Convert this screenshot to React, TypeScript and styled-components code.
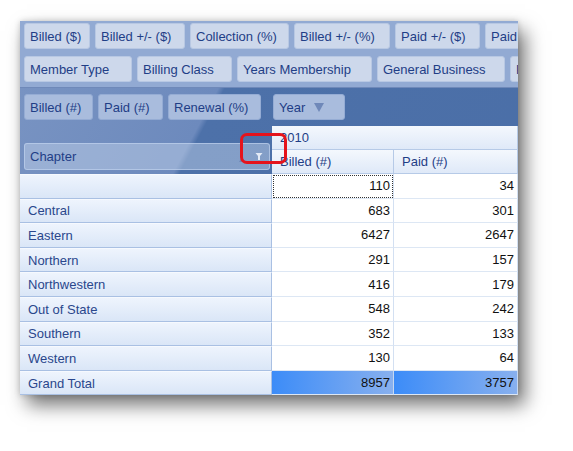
import styled, { createGlobalStyle } from 'styled-components';

const GlobalStyle = createGlobalStyle`
  html, body {
    margin: 0;
    padding: 0;
    background: #ffffff;
  }
  body {
    font-family: 'Liberation Sans', Arial, sans-serif;
    font-size: 13px;
  }
`;

const Page = styled.div`
  width: 573px;
  height: 451px;
  padding: 21px 0 0 20px;
  box-sizing: border-box;
  overflow: hidden;
`;

const Panel = styled.div`
  position: relative;
  width: 498px;
  background: #ffffff;
  box-shadow: 7px 10px 18px rgba(0, 0, 0, 0.55), 0 0 6px rgba(0, 0, 0, 0.18);
`;

const FieldArea = styled.div`
  display: flex;
  flex-direction: column;
  gap: 7px;
  padding: 2px 0 5px 4px;
  background: #92aad3;
  border-bottom: 1px solid #6f89b9;
  overflow: hidden;
`;

const ChipRow = styled.div`
  display: flex;
  gap: 5px;
  white-space: nowrap;
`;

const Chip = styled.div<{ $w: number; $dark?: boolean }>`
  flex: none;
  width: ${(p) => p.$w}px;
  height: 26px;
  box-sizing: border-box;
  display: flex;
  align-items: center;
  gap: 9px;
  padding: 0 0 0 5px;
  border-radius: 3px;
  background: ${(p) => (p.$dark ? '#a9bcdd' : '#cdd8eb')};
  border: 1px solid ${(p) => (p.$dark ? '#95acd4' : '#b8c8e3')};
  color: #1f3e86;
  overflow: hidden;
`;

const DropArrow = styled.span`
  width: 0;
  height: 0;
  border-left: 5px solid transparent;
  border-right: 5px solid transparent;
  border-top: 9px solid #6f88b9;
`;

const DarkArea = styled.div`
  background: linear-gradient(118deg, #7893c2 0%, #6d8abd 30%, #4d71a9 31%, #4a6ea7 100%);
`;

const DataToolbar = styled.div`
  display: flex;
  gap: 5px;
  padding: 6px 0 6px 4px;
`;

const Spacer = styled.div<{ $w: number }>`
  flex: none;
  width: ${(p) => p.$w}px;
`;

const Grid = styled.div`
  display: grid;
  grid-template-columns: 252px 122px 1fr;
  grid-template-rows: 24px 24px;
  grid-auto-rows: 24.6px;
`;

const ChapterSlot = styled.div`
  grid-row: span 2;
  display: flex;
  align-items: flex-end;
  padding: 0 2px 4px 4px;
`;

const ChapterButton = styled.div`
  flex: 1;
  height: 27px;
  box-sizing: border-box;
  display: flex;
  align-items: center;
  padding: 0 6px 0 5px;
  border-radius: 3px;
  background: rgba(200, 215, 238, 0.45);
  border: 1px solid rgba(190, 208, 236, 0.7);
  color: #1f3e86;
`;

const ChapterLabel = styled.span`
  flex: 1;
`;

const SortMark = styled.span`
  width: 0;
  height: 0;
  margin-right: 10px;
  margin-top: 6px;
  border-left: 3px solid transparent;
  border-right: 3px solid transparent;
  border-bottom: 5px solid #6c86b6;
`;

const HeaderCell = styled.div<{ $span?: number }>`
  grid-column: span ${(p) => p.$span ?? 1};
  display: flex;
  align-items: center;
  padding-left: 8px;
  box-sizing: border-box;
  background: linear-gradient(#f4f8fd, #dfe9f8);
  border-right: 1px solid #b6cae7;
  border-bottom: 1px solid #b6cae7;
  color: #1f3e86;
`;

const RowHeader = styled.div`
  display: flex;
  align-items: center;
  padding-left: 8px;
  box-sizing: border-box;
  background: linear-gradient(#eef4fd, #dae6f7);
  border-top: 1px solid #f6f9fe;
  border-bottom: 1px solid #a9c0e3;
  border-right: 1px solid #a9c0e3;
  color: #2a478c;
`;

const ValueCell = styled.div<{ $total?: boolean; $focus?: boolean }>`
  display: flex;
  align-items: center;
  justify-content: flex-end;
  padding-right: 3px;
  box-sizing: border-box;
  color: #111111;
  background: ${(p) => (p.$total ? 'linear-gradient(90deg, #3c8cf8, #88b0ee)' : '#ffffff')};
  border-right: 1px solid ${(p) => (p.$total ? '#c7d8f0' : '#d3e0f2')};
  border-bottom: 1px solid #dde7f4;
  outline: ${(p) => (p.$focus ? '1px dotted #333333' : 'none')};
  outline-offset: -2px;
`;

const Highlight = styled.div`
  position: absolute;
  left: 220px;
  top: 112px;
  width: 47px;
  height: 31px;
  box-sizing: border-box;
  border: 3px solid #e5131c;
  border-radius: 7px;
  pointer-events: none;
`;

const FilterIcon = () => (
  <svg width="8" height="9" viewBox="0 0 8 9">
    <path d="M0.5 1 H7.5 L5 4 V8 H3 V4 Z" fill="#e3eaf6" />
  </svg>
);

const filterRows = [
  [
    { label: 'Billed ($)', w: 66 },
    { label: 'Billed +/- ($)', w: 90 },
    { label: 'Collection (%)', w: 99 },
    { label: 'Billed +/- (%)', w: 96 },
    { label: 'Paid +/- ($)', w: 85 },
    { label: 'Paid +/- (%)', w: 90 },
  ],
  [
    { label: 'Member Type', w: 108 },
    { label: 'Billing Class', w: 95 },
    { label: 'Years Membership', w: 135 },
    { label: 'General Business', w: 128 },
    { label: 'Payment Method', w: 110 },
  ],
];

const dataFields = [
  { label: 'Billed (#)', w: 69 },
  { label: 'Paid (#)', w: 65 },
  { label: 'Renewal (%)', w: 93 },
];

const chapters = [
  { name: '', billed: 110, paid: 34 },
  { name: 'Central', billed: 683, paid: 301 },
  { name: 'Eastern', billed: 6427, paid: 2647 },
  { name: 'Northern', billed: 291, paid: 157 },
  { name: 'Northwestern', billed: 416, paid: 179 },
  { name: 'Out of State', billed: 548, paid: 242 },
  { name: 'Southern', billed: 352, paid: 133 },
  { name: 'Western', billed: 130, paid: 64 },
];

export default function App() {
  const totalBilled = chapters.reduce((s, c) => s + c.billed, 0);
  const totalPaid = chapters.reduce((s, c) => s + c.paid, 0);

  return (
    <Page>
      <GlobalStyle />
      <Panel>
        <FieldArea>
          {filterRows.map((row, i) => (
            <ChipRow key={i}>
              {row.map((f) => (
                <Chip key={f.label} $w={f.w}>
                  {f.label}
                </Chip>
              ))}
            </ChipRow>
          ))}
        </FieldArea>
        <DarkArea>
          <DataToolbar>
            {dataFields.map((f) => (
              <Chip key={f.label} $w={f.w} $dark>
                {f.label}
              </Chip>
            ))}
            <Spacer $w={2} />
            <Chip $w={72} $dark>
              Year
              <DropArrow />
            </Chip>
          </DataToolbar>
          <Grid>
            <ChapterSlot>
              <ChapterButton>
                <ChapterLabel>Chapter</ChapterLabel>
                <SortMark />
                <FilterIcon />
              </ChapterButton>
            </ChapterSlot>
            <HeaderCell $span={2}>2010</HeaderCell>
            <HeaderCell>Billed (#)</HeaderCell>
            <HeaderCell>Paid (#)</HeaderCell>
            {chapters.map((c, i) => (
              <>
                <RowHeader key={`h${i}`}>{c.name}</RowHeader>
                <ValueCell key={`b${i}`} $focus={i === 0}>
                  {c.billed}
                </ValueCell>
                <ValueCell key={`p${i}`}>{c.paid}</ValueCell>
              </>
            ))}
            <RowHeader>Grand Total</RowHeader>
            <ValueCell $total>{totalBilled}</ValueCell>
            <ValueCell $total>{totalPaid}</ValueCell>
          </Grid>
        </DarkArea>
        <Highlight />
      </Panel>
    </Page>
  );
}
